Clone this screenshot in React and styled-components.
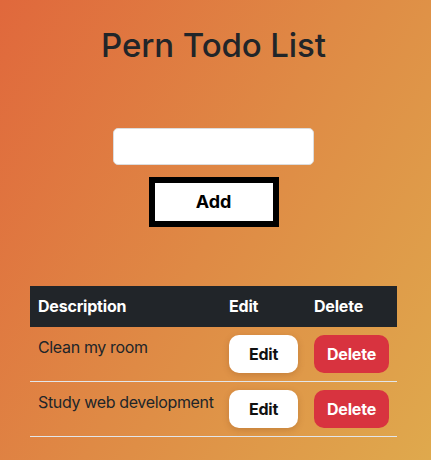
import React from "react";
import styled, { createGlobalStyle } from "styled-components";

const GlobalStyle = createGlobalStyle`
  html, body {
    margin: 0;
    padding: 0;
  }
  body {
    font-family: Inter, "Liberation Sans", sans-serif;
    color: #212529;
    min-height: 460px;
    background: linear-gradient(120deg, #e0683c 0%, #df8a45 50%, #dfa94d 100%);
  }
`;

const todos = [
  { id: 1, description: "Clean my room" },
  { id: 2, description: "Study web development" },
];

function App() {
  return (
    <>
      <GlobalStyle />
      <Page>
        <Title>Pern Todo List</Title>
        <Form onSubmit={(e) => e.preventDefault()}>
          <Input type="text" />
          <AddButton type="submit">Add</AddButton>
        </Form>
        <Table>
          <colgroup>
            <col style={{ width: 191 }} />
            <col style={{ width: 85 }} />
            <col style={{ width: 91 }} />
          </colgroup>
          <thead>
            <tr>
              <Th>Description</Th>
              <Th>Edit</Th>
              <Th>Delete</Th>
            </tr>
          </thead>
          <tbody>
            {todos.map((todo) => (
              <Row key={todo.id}>
                <Td>{todo.description}</Td>
                <Td>
                  <ActionButton>Edit</ActionButton>
                </Td>
                <Td>
                  <ActionButton $danger>Delete</ActionButton>
                </Td>
              </Row>
            ))}
          </tbody>
        </Table>
      </Page>
    </>
  );
}

const Page = styled.div`
  padding-top: 26px;
  padding-right: 4px;
  display: flex;
  flex-direction: column;
  align-items: center;
`;

const Title = styled.h1`
  margin: 0;
  font-size: 33px;
  font-weight: 500;
  line-height: 1.2;
  letter-spacing: -0.1px;
  color: #212529;
`;

const Form = styled.form`
  margin-top: 62px;
  display: flex;
  flex-direction: column;
  align-items: center;
  gap: 12px;
`;

const Input = styled.input`
  box-sizing: border-box;
  width: 201px;
  height: 37px;
  border: 1px solid #dcdcdc;
  border-radius: 5px;
  background: #fff;
  outline: none;
`;

const AddButton = styled.button`
  box-sizing: border-box;
  width: 130px;
  height: 50px;
  border: 6px solid #000;
  background: #fff;
  font-family: Inter, "Liberation Sans", sans-serif;
  font-size: 18px;
  font-weight: 700;
  color: #000;
  cursor: pointer;
`;

const Table = styled.table`
  margin-top: 59px;
  width: 367px;
  table-layout: fixed;
  border-collapse: collapse;
  font-size: 16px;
  line-height: 24px;
`;

const Th = styled.th`
  padding: 8px;
  background: #212529;
  color: #fff;
  text-align: left;
  font-weight: 700;
  letter-spacing: -0.2px;
  border-bottom: 1px solid #212529;
`;

const Row = styled.tr`
  border-bottom: 1px solid #e3e6ea;
`;

const Td = styled.td`
  padding: 8px;
  vertical-align: top;
  color: #212529;
  white-space: nowrap;
  letter-spacing: -0.35px;
`;

const ActionButton = styled.button`
  box-sizing: border-box;
  height: 38px;
  padding: 6px 0;
  width: ${(p) => (p.$danger ? "75px" : "69px")};
  border: none;
  border-radius: 10px;
  background: ${(p) => (p.$danger ? "#d8333f" : "#fff")};
  color: ${(p) => (p.$danger ? "#fff" : "#111")};
  font-family: Inter, "Liberation Sans", sans-serif;
  font-size: 16px;
  font-weight: 700;
  letter-spacing: -0.2px;
  box-shadow: ${(p) => (p.$danger ? "none" : "0 2px 6px rgba(120, 60, 20, 0.25)")};
  cursor: pointer;
`;

export default App;
